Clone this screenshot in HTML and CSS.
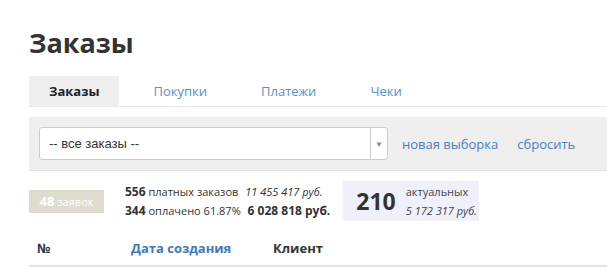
FILE: index.html
```html
<!DOCTYPE html>
<html lang="ru">
<head>
    <meta charset="UTF-8">
    <title>Заказы</title>
    <link rel="stylesheet" href="styles.css">
</head>
<body>
    <div class="page">
        <h1>Заказы</h1>

        <div class="tabs">
            <a href="#" class="tab active">Заказы</a>
            <a href="#" class="tab">Покупки</a>
            <a href="#" class="tab">Платежи</a>
            <a href="#" class="tab">Чеки</a>
        </div>

        <div class="filter-bar">
            <div class="select">
                <span class="select-value">-- все заказы --</span>
                <span class="select-arrow">&#9660;</span>
            </div>
            <a href="#" class="filter-link">новая выборка</a>
            <a href="#" class="filter-link reset">сбросить</a>
        </div>

        <div class="stats">
            <div class="badge"><b>48</b> заявок</div>
            <div class="totals">
                <div class="totals-row">
                    <b>556</b> платных заказов <i class="sum">11 455 417 руб.</i>
                </div>
                <div class="totals-row">
                    <b>344</b> оплачено 61.87% <b class="sum">6 028 818 руб.</b>
                </div>
            </div>
            <div class="actual">
                <span class="actual-count">210</span>
                <div class="actual-text">
                    <div>актуальных</div>
                    <i>5 172 317 руб.</i>
                </div>
            </div>
        </div>

        <div class="table-head">
            <div class="col col-num">№</div>
            <a href="#" class="col col-date">Дата создания</a>
            <div class="col col-client">Клиент</div>
        </div>
    </div>
</body>
</html>
```

FILE: styles.css
```css
body {
    margin: 0;
    font-family: "Open Sans", Arial, sans-serif;
    color: #333;
    background-color: #fff;
}

.page {
    padding: 23px 0 0 29px;
}

h1 {
    margin: 0 0 13px;
    font-size: 27px;
    line-height: 40px;
    font-weight: 700;
    color: #333;
}

.tabs {
    display: flex;
    border-bottom: 1px solid #e8e8e8;
}

.tab {
    display: block;
    padding: 0 20px;
    line-height: 30px;
    font-size: 13px;
    color: #5b8fcf;
    text-decoration: none;
    margin-right: 14px;
}

.tab.active {
    background-color: #efefef;
    color: #222;
    font-weight: 700;
    margin-right: 14px;
}

.filter-bar {
    display: flex;
    align-items: center;
    margin-top: 10px;
    padding: 10px;
    background-color: #efefef;
    border-bottom: 1px solid #e2e2e2;
}

.select {
    display: flex;
    width: 347px;
    height: 31px;
    background: #fff;
    border: 1px solid #ccc;
    border-radius: 3px;
}

.select-value {
    flex: 1;
    padding-left: 9px;
    line-height: 31px;
    font-family: "Liberation Sans", Arial, sans-serif;
    font-size: 13px;
    color: #333;
}

.select-arrow {
    width: 16px;
    border-left: 1px solid #ccc;
    line-height: 31px;
    text-align: center;
    font-size: 8px;
    color: #888;
}

.filter-link {
    margin-left: 14px;
    font-size: 13px;
    color: #4a80bb;
    text-decoration: none;
}

.filter-link.reset {
    margin-left: 19px;
}

.stats {
    display: flex;
    align-items: center;
    margin-top: 10px;
}

.badge {
    width: 75px;
    line-height: 23px;
    text-align: center;
    background-color: #dedcce;
    color: #fff;
    font-size: 11px;
}

.badge b {
    font-size: 13px;
}

.totals {
    margin-left: 21px;
    font-size: 11px;
    line-height: 19px;
}

.totals-row b {
    font-size: 12px;
}

.sum {
    margin-left: 4px;
}

.actual {
    display: flex;
    align-items: center;
    margin-left: 13px;
    padding: 0 2px 0 13px;
    height: 40px;
    background-color: #f0f0fb;
}

.actual-count {
    font-size: 23px;
    font-weight: 700;
    margin-right: 10px;
}

.actual-text {
    font-size: 11px;
    line-height: 19px;
    color: #444;
}

.table-head {
    display: flex;
    margin-top: 17px;
    padding-bottom: 7px;
    line-height: 20px;
    border-bottom: 2px solid #e4e4e4;
    font-size: 13px;
    font-weight: 700;
}

.col-num {
    width: 94px;
    padding-left: 8px;
}

.col-date {
    width: 142px;
    color: #3f79b7;
    text-decoration: none;
}
```
